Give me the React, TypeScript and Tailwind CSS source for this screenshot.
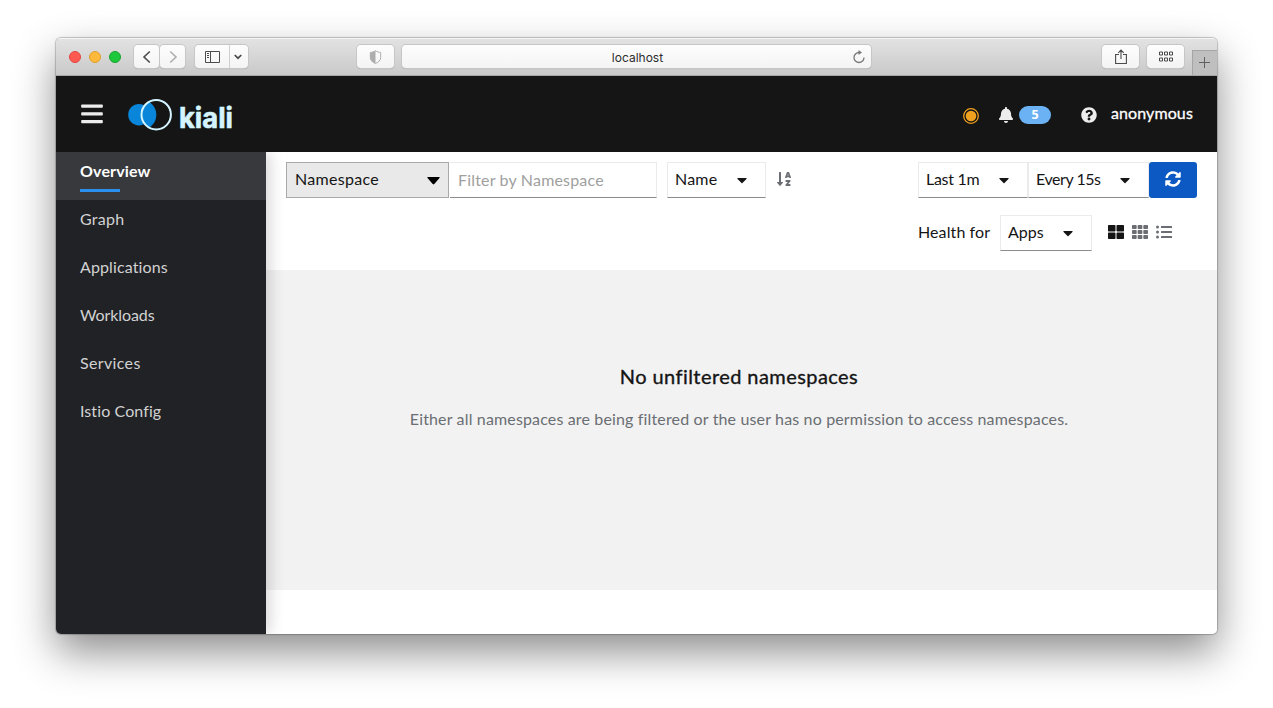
import type { ReactNode } from "react";
import {
  FaBell,
  FaCaretDown,
  FaListUl,
  FaQuestionCircle,
  FaSortAlphaDown,
  FaSyncAlt,
  FaTh,
  FaThLarge,
} from "react-icons/fa";

const chromeButton =
  "flex items-center justify-center h-[23px] bg-gradient-to-b from-[#fdfdfd] to-[#f4f4f4] rounded-[4px] shadow-[0_0_0_1px_#c6c6c6,0_1px_1px_#a0a0a0]";

function TitleBar() {
  return (
    <div className="flex h-[38px] shrink-0 items-center border-b border-[#a5a5a5] bg-gradient-to-b from-[#e3e3e3] to-[#c9c9c9] shadow-[inset_0_1px_0_#f4f4f4]">
      <div className="ml-[13px] flex gap-[8px]">
        <span className="size-3 rounded-full border border-[#e2463f] bg-[#ff5a52]" />
        <span className="size-3 rounded-full border border-[#e0a02f] bg-[#fdb93c]" />
        <span className="size-3 rounded-full border border-[#17a42b] bg-[#1ec83c]" />
      </div>
      <div className="ml-[13px] flex gap-[1px]">
        <span className={`${chromeButton} w-[25px]`}>
          <svg width="10" height="14" viewBox="0 0 10 14" fill="none" stroke="#4b4b4b" strokeWidth="1.6">
            <path d="M7.8 1.5 2 7l5.800 5.500" />
          </svg>
        </span>
        <span className={`${chromeButton} w-[25px]`}>
          <svg width="10" height="14" viewBox="0 0 10 14" fill="none" stroke="#adadad" strokeWidth="1.600">
            <path d="M2.200 1.500 8 7l-5.800 5.500" />
          </svg>
        </span>
      </div>
      <div className={`${chromeButton} ml-[10px] w-[53px]`}>
        <span className="flex h-full w-[35px] items-center justify-center border-r border-[#cfcfcf] pl-[1px]">
          <svg width="15" height="12" viewBox="0 0 15 12" fill="none" stroke="#4b4b4b">
            <path d="M.5.500h14v11H.500zM5.500.500v11M2 2.500h2M2 4.500h2M2 6.500h2" />
          </svg>
        </span>
        <span className="flex flex-1 items-center justify-center pr-[2px]">
          <svg width="8" height="6" viewBox="0 0 8 6" fill="none" stroke="#4b4b4b" strokeWidth="1.700">
            <path d="M.700 1 4 4.200 7.300 1" />
          </svg>
        </span>
      </div>
      <div className={`${chromeButton} ml-[109px] w-[37px]`}>
        <svg width="13" height="14" viewBox="0 0 13 14">
          <path d="M6.500.800C8.300 2 10 2.300 11.700 2.500V7.500c0 3-2.200 4.700-5.200 6-3-1.300-5.200-3-5.200-6v-5C3 2.300 4.700 2 6.500.800z" fill="none" stroke="#adadad" />
          <path d="M6.500.800v12.700c-3-1.300-5.200-3-5.200-6v-5C3 2.300 4.700 2 6.500.800z" fill="#adadad" />
        </svg>
      </div>
      <div className={`${chromeButton} ml-[8px] w-[469px]`}>
        <span className="w-[18px]" />
        <span className="flex-1 pt-[2px] pl-[3px] text-center font-['Inter',sans-serif] text-[12px] text-[#2d2d2d]">localhost</span>
        <svg className="mr-[5px]" width="14" height="14" viewBox="0 0 14 14" fill="none" stroke="#787878" strokeWidth="1.300">
          <path d="M7.500 2.500H7a5 5 0 1 0 5 5" />
          <path d="M6.500 0 10 2.500 6.500 5z" fill="#787878" stroke="none" />
        </svg>
      </div>
      <div className={`${chromeButton} ml-auto w-[37px]`}>
        <svg width="12" height="16" viewBox="0 0 12 16" fill="none" stroke="#4b4b4b" strokeWidth="1.100">
          <path d="M4 5.500H.600v9h10.800v-9H8M6 10V1.200M3.300 3.800 6 1.100l2.700 2.700" />
        </svg>
      </div>
      <div className={`${chromeButton} ml-[8px] w-[37px]`}>
        <svg width="14" height="11" viewBox="0 0 14 11" fill="none" stroke="#4b4b4b">
          <path d="M.500 1h3v3h-3zM5.500 1h3v3h-3zM10.500 1h3v3h-3zM.500 7h3v3h-3zM5.500 7h3v3h-3zM10.500 7h3v3h-3z" />
        </svg>
      </div>
      <div className="ml-[8px] flex h-[25px] w-[25px] items-center justify-center self-end border-t border-l border-[#a5a5a5] bg-[#bfbfbf] pr-[2px] pb-[2px]">
        <svg width="11" height="11" viewBox="0 0 11 11" stroke="#606060">
          <path d="M5.500 0v11M0 5.500h11" />
        </svg>
      </div>
    </div>
  );
}

function Logo() {
  return (
    <svg className="mt-[2px] ml-[25px] overflow-visible" width="112" height="40" viewBox="0 -2 112 40">
      <defs>
        <clipPath id="ring">
          <circle cx="28" cy="18" r="15" />
        </clipPath>
      </defs>
      <circle cx="11" cy="17.700" r="10.800" fill="#0986d9" />
      <circle cx="28.200" cy="17.700" r="14.500" fill="#151515" />
      <circle cx="13" cy="17.700" r="15.300" fill="#0986d9" clipPath="url(#ring)" />
      <circle cx="28.200" cy="17.700" r="14.700" fill="none" stroke="#d4f5ff" strokeWidth="2" />
      <text
        className="font-['Inter',sans-serif] text-[28px] font-bold"
        x="51"
        y="30.500"
        fill="#d4f5ff"
        stroke="#d4f5ff"
        strokeWidth="0.600"
        strokeLinejoin="round"
        textLength="54"
        lengthAdjust="spacingAndGlyphs"
      >
        kiali
      </text>
    </svg>
  );
}

function Masthead() {
  return (
    <header className="z-20 flex h-[76px] shrink-0 items-center bg-[#151515] text-[#ededed]">
      <svg className="ml-[25px]" width="22" height="20" viewBox="0 0 22 20" fill="#ededed">
        <rect x="0.200" y="0.500" width="21.600" height="3.300" rx="0.800" />
        <rect x="0.200" y="8.300" width="21.600" height="3.300" rx="0.800" />
        <rect x="0.200" y="16" width="21.600" height="3.300" rx="0.800" />
      </svg>
      <Logo />
      <div className="mr-[24px] ml-auto flex items-center">
        <svg className="mt-[3px]" width="18" height="18" viewBox="0 0 18 18">
          <circle cx="9" cy="9" r="7.300" fill="none" stroke="#f0a01f" strokeWidth="1.300" />
          <circle cx="9" cy="9" r="5.300" fill="#f0a01f" />
        </svg>
        <FaBell className="mt-[2px] ml-[18px] size-[16px]" />
        <span className="mt-[2px] ml-[5px] flex h-[18px] w-8 items-center justify-center rounded-full bg-[#6bb2f5] font-['Open_Sans',sans-serif] text-[12.500px] font-bold text-white">5</span>
        <FaQuestionCircle className="mt-[2px] ml-[30px] size-[16px]" />
        <span className="mb-[2px] ml-[14px] w-[82px] text-[16px] tracking-[0.100px] whitespace-nowrap text-white [-webkit-text-stroke:0.300px_white]">anonymous</span>
      </div>
    </header>
  );
}

const navItems = [
  { label: "Overview", style: "tracking-[0.150px]" },
  { label: "Graph", style: "tracking-[0.250px]" },
  { label: "Applications", style: "tracking-[0.120px]" },
  { label: "Workloads", style: "tracking-[-0.100px]" },
  { label: "Services", style: "tracking-[0.350px]" },
  { label: "Istio Config", style: "tracking-[0.100px]" },
];

function Sidebar() {
  return (
    <nav className="z-10 w-[210px] shrink-0 bg-[#212226] text-[16px] leading-6 text-[#d2d2d2] shadow-[4px_0_14px_rgba(0,0,0,0.160)]">
      {navItems.map(({ label, style }, index) => (
        <div key={label} className={index === 0 ? "h-12 bg-[#38393c] px-6 pt-[7px] font-bold text-white" : "h-12 px-6 pt-[7px]"}>
          <div className={style}>{label}</div>
          {index === 0 && <div className="mt-[6px] h-[3px] w-10 bg-[#2b8ff0]" />}
        </div>
      ))}
    </nav>
  );
}

function Select({ className, children }: { className: string; children: ReactNode }) {
  return (
    <div className={`flex h-9 items-center justify-between border border-[#ebebeb] border-b-[#8a8d90] pl-[7px] text-[#151515] ${className}`}>
      <span className="mb-[2px] whitespace-nowrap">{children}</span>
      <FaCaretDown className="size-[16px] w-[10px] shrink-0" />
    </div>
  );
}

function Toolbar() {
  return (
    <section className="flex h-[118px] shrink-0 justify-between pt-[10px] pr-5 pl-5 text-[16px]">
      <div className="flex h-9 items-center">
        <div className="flex h-9 w-[163px] items-center justify-between border border-[#a9a9a9] bg-[#e9e9e9] pr-[8px] pl-[8px] text-[#151515]">
          <span className="mb-[2px] tracking-[0.300px]">Namespace</span>
          <svg className="mt-[2px]" width="13" height="8" viewBox="0 0 13 8">
            <path d="M.700 0h11.600q.700.300.200 1L7.300 7q-.800.900-1.600 0L.500 1Q0 .300.700 0z" />
          </svg>
        </div>
        <div className="ml-[1px] flex h-9 w-[207px] items-center border border-l-0 border-[#ebebeb] border-b-[#8a8d90] pb-[1px] pl-[8px] tracking-[0.180px] text-[#a0a0a0]">Filter by Namespace</div>
        <Select className="ml-[10px] w-[99px] pr-[18px]">
          <span className="tracking-[0.200px]">Name</span>
        </Select>
        <FaSortAlphaDown className="mb-[2px] ml-[10px] size-[16px] text-[#6a6e73]" />
      </div>
      <div className="w-[279px]">
        <div className="flex">
          <Select className="w-[110px] pr-[18px]">
            <span className="tracking-[-0.300px]">Last 1m</span>
          </Select>
          <Select className="w-[121px] pr-[18px]">
            <span className="tracking-[-0.450px]">Every 15s</span>
          </Select>
          <button className="flex h-9 w-12 items-center justify-center rounded-[3px] bg-[#0c59c3] text-white">
            <FaSyncAlt className="mb-[2px] size-[16px]" />
          </button>
        </div>
        <div className="mt-[17px] flex items-center">
          <span className="mb-[2px] w-[82px] tracking-[0.100px] text-[#151515]">Health for</span>
          <Select className="w-[92px] pr-[18px]">Apps</Select>
          <div className="mb-[2px] ml-[16px] flex gap-2 text-[#6a6e73]">
            <FaThLarge className="size-[16px] text-[#151515]" />
            <FaTh className="size-[16px]" />
            <FaListUl className="size-[16px]" />
          </div>
        </div>
      </div>
    </section>
  );
}

function EmptyState() {
  return (
    <section className="flex h-[320px] shrink-0 flex-col items-center bg-[#f2f2f2] pt-[91px] pr-[5px]">
      <h1 className="text-[20px] leading-[30px] tracking-[0.430px] text-[#151515] [-webkit-text-stroke:0.350px_#151515]">No unfiltered namespaces</h1>
      <p className="mt-[16px] text-[16px] leading-6 tracking-[0.150px] whitespace-nowrap text-[#6a6e73]">
        Either all namespaces are being filtered or the user has no permission to access namespaces.
      </p>
    </section>
  );
}

export default function App() {
  return (
    <div className="flex h-[708px] w-[1273px] overflow-hidden bg-white pt-[38px] pl-[56px] font-['Lato',sans-serif]">
      <div className="flex h-[596px] w-[1161px] flex-col overflow-hidden rounded-[5px] shadow-[0_0_1px_1px_rgba(0,0,0,0.220),0_18px_42px_rgba(0,0,0,0.450)]">
        <TitleBar />
        <Masthead />
        <div className="flex min-h-0 flex-1">
          <Sidebar />
          <main className="flex min-w-0 flex-1 flex-col bg-white">
            <Toolbar />
            <EmptyState />
          </main>
        </div>
      </div>
    </div>
  );
}
